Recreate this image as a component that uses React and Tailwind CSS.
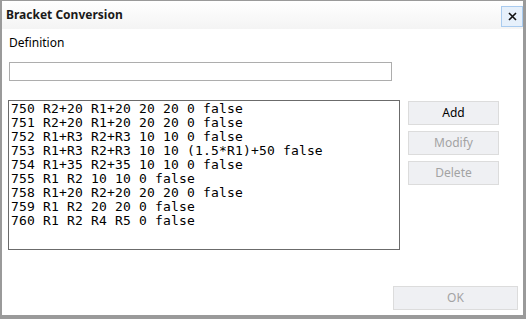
import React from 'react';

const rows = [
    '750 R2+20 R1+20 20 20 0 false',
    '751 R2+20 R1+20 20 20 0 false',
    '752 R1+R3 R2+R3 10 10 0 false',
    '753 R1+R3 R2+R3 10 10 (1.5*R1)+50 false',
    '754 R1+35 R2+35 10 10 0 false',
    '755 R1 R2 10 10 0 false',
    '758 R1+20 R2+20 20 20 0 false',
    '759 R1 R2 20 20 0 false',
    '760 R1 R2 R4 R5 0 false',
];

const uiFont = { fontFamily: '"Noto Sans", "Open Sans", sans-serif' };

const App = () => {
    return (
        <div
            className="w-[526px] h-[319px] bg-white border-[#9a9a9a] border-t border-l-2 border-r-[3px] border-b-4 flex flex-col text-[12px] text-black"
            style={uiFont}
        >
            {/* Title bar */}
            <div className="h-[28px] flex items-center justify-between pl-[4px] pr-[0px] bg-gradient-to-b from-white to-[#f4f4f4]">
                <span className="font-bold text-[12px] leading-[14px] text-[#1a1a1a]">Bracket Conversion</span>
                <button className="w-[22px] h-[21px] mt-[3px] border border-[#a9cbef] bg-[#e6f0fb] flex items-center justify-center">
                    <svg width="9" height="9" viewBox="0 0 9 9">
                        <path d="M1 1 L8 8 M8 1 L1 8" stroke="#111" strokeWidth="1.6" />
                    </svg>
                </button>
            </div>

            {/* Body */}
            <div className="flex flex-col pt-[7px]">
                <label className="ml-[7px] leading-[14px] text-[12px]">Definition</label>
                <input
                    type="text"
                    className="ml-[7px] mt-[12px] w-[383px] h-[19px] border border-[#adadad] outline-none"
                />

                <div className="flex mt-[19px] ml-[6px]">
                    <div
                        className="w-[392px] h-[150px] border border-[#6b6b6b] pl-[2px] pt-[1px] text-[13px] leading-[14px] tracking-[0.17px] text-black"
                        style={{ fontFamily: '"DejaVu Sans Mono", monospace' }}
                    >
                        {rows.map((r) => (
                            <div key={r} className="whitespace-pre">{r}</div>
                        ))}
                    </div>
                    <div className="ml-[8px] mt-[1px] flex flex-col gap-[6px]">
                        <button className="w-[91px] h-[24px] bg-[#eff0f3] border border-[#dcdcdc] text-[12px] text-black">Add</button>
                        <button className="w-[91px] h-[24px] bg-[#eff0f3] border border-[#dcdcdc] text-[12px] text-[#a3a3a3]">Modify</button>
                        <button className="w-[91px] h-[24px] bg-[#eff0f3] border border-[#dcdcdc] text-[12px] text-[#a3a3a3]">Delete</button>
                    </div>
                </div>

                <div className="flex justify-end mt-[36px] mr-[5px]">
                    <button className="w-[125px] h-[24px] bg-[#eff0f3] border border-[#dcdcdc] text-[12px] text-[#a3a3a3]">OK</button>
                </div>
            </div>
        </div>
    );
};

export default App;
